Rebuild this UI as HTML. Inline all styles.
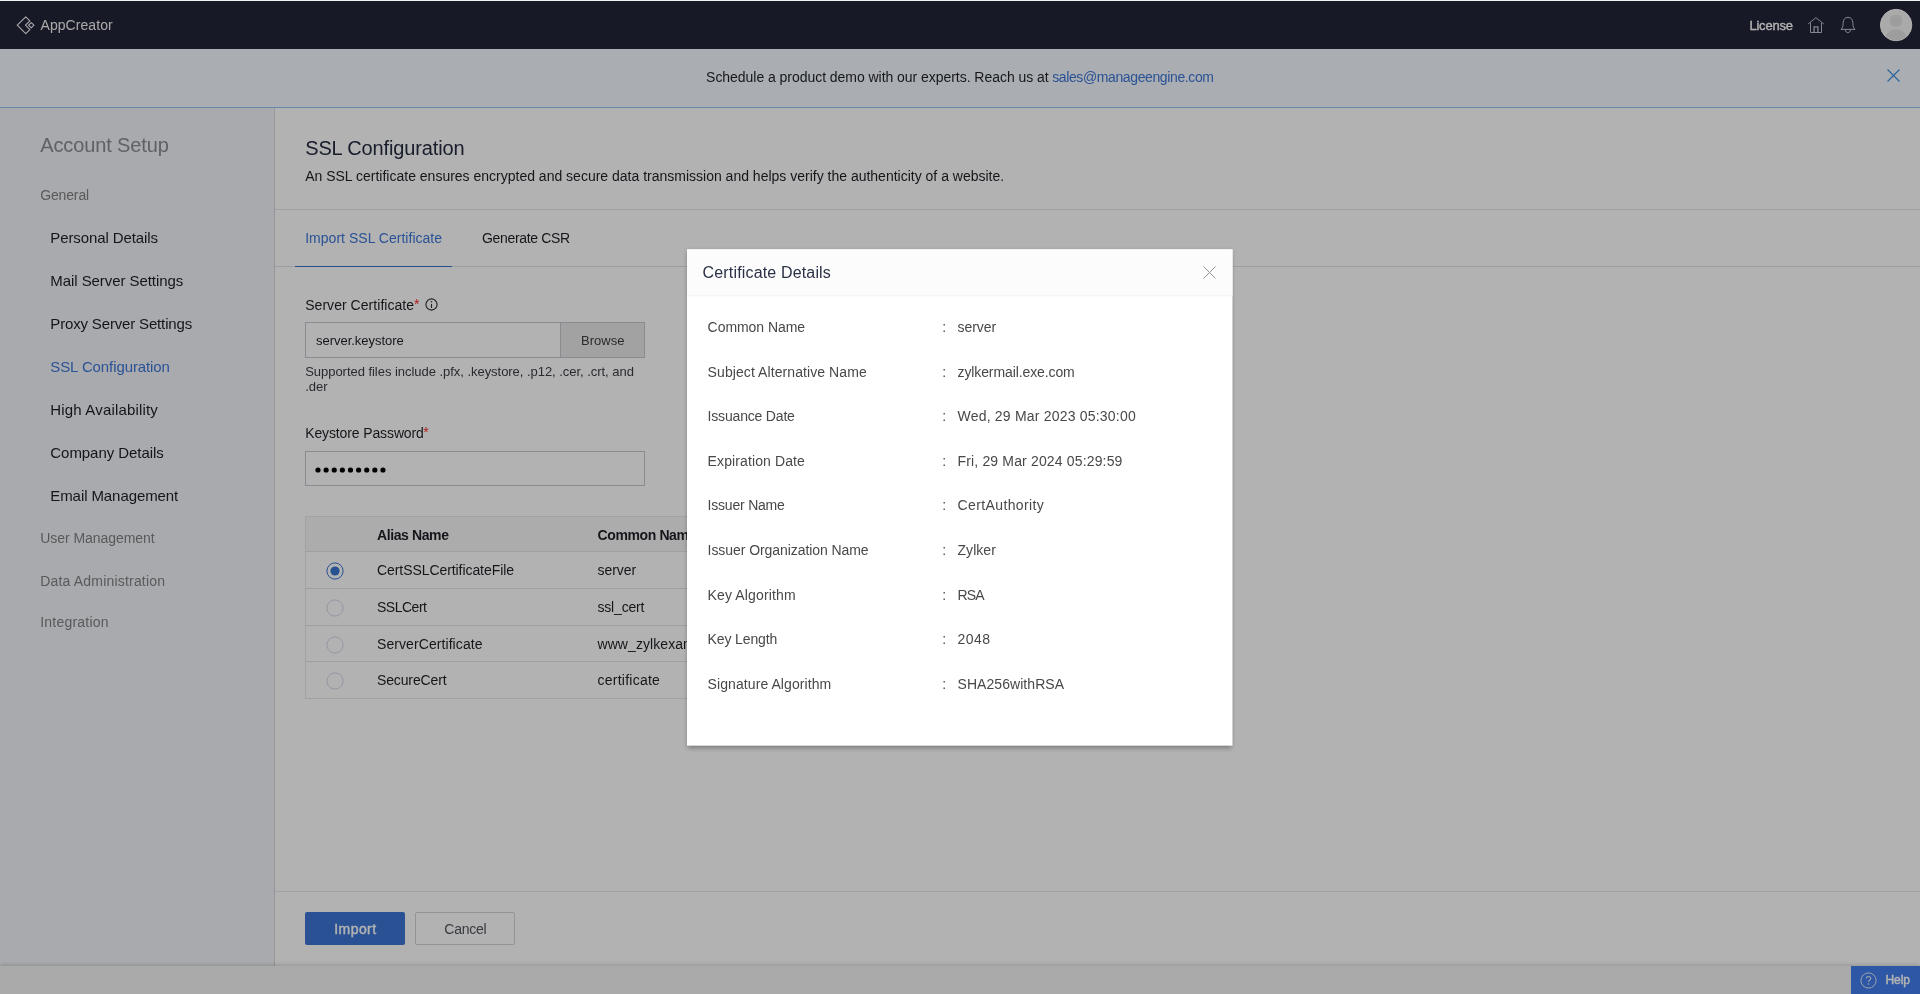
<!DOCTYPE html>
<html lang="en">
<head>
<meta charset="utf-8">
<title>SSL Configuration - AppCreator</title>
<style>
*{box-sizing:border-box;margin:0;padding:0}
html,body{width:1920px;height:994px;overflow:hidden}
body{font-family:"Liberation Sans",sans-serif;background:#fff;color:#222;position:relative;font-size:14px}
.abs{position:absolute}
.t{position:absolute;white-space:pre}
#txt,#mtxt{left:0;top:0;width:1920px;height:994px;will-change:transform}
#page{left:0;top:0;width:1920px;height:994px;overflow:hidden}
#topline{left:0;top:0;width:1920px;height:1px;background:#f1f2ef}
#hdr{left:0;top:1px;width:1920px;height:48px;background:#222538}
#banner{left:0;top:49px;width:1920px;height:59px;background:#f4f8fe;border-bottom:1px solid #98c3f3}
#side{left:0;top:108px;width:275px;height:858px;background:#f3f4f9;border-right:1px solid #d8d8d8}
#main{left:275px;top:108px;width:1645px;height:858px;background:#fff}
#bottom{left:0;top:966px;width:1920px;height:28px;background:#f4f4f4;box-shadow:0 -1px 4px rgba(0,0,0,.18)}
.hl{position:absolute;height:1px;background:#e4e5e8}
#overlay{left:0;top:0;width:1920px;height:994px;background:rgba(0,0,0,.3)}
#modal{left:0;top:0;width:546px;height:497px;transform-origin:0 0;transform:translate(687px,249.33px) scale(.999084,.998652);background:#fff;box-shadow:0 2px 5px rgba(0,0,0,.32)}
#mhead{left:0;top:0;width:546px;height:46.7px;background:#fcfcfd;border-bottom:1px solid #f3f3f5}
svg{position:absolute;overflow:visible}
</style>
</head>
<body>
<div class="abs" id="page">
<div class="abs" id="hdr"></div>
<div class="abs" id="banner"></div>
<div class="abs" id="side"></div>
<div class="abs" id="main"></div>
<div class="hl" style="left:275px;top:209px;width:1645px"></div>
<div class="hl" style="left:275px;top:266px;width:1645px;background:#dde2e8"></div>
<div class="abs" style="left:295px;top:266px;width:157px;height:1px;background:#3872cc"></div>
<div class="hl" style="left:275px;top:891px;width:1645px"></div>
<!-- file input -->
<div class="abs" style="left:305px;top:322px;width:340px;height:36px;border:1px solid #c6c8cf;background:#fff"></div>
<div class="abs" style="left:560px;top:322px;width:85px;height:36px;border:1px solid #c6c8cf;background:#e9e9e9"></div>
<svg style="left:425.4px;top:298.3px" width="13" height="13" viewBox="0 0 13 13"><circle cx="6.5" cy="6.5" r="5.6" fill="none" stroke="#2e3035" stroke-width="1.1"/><rect x="5.950" y="5.9" width="1.1" height="4.1" fill="#2e3035"/><circle cx="6.5" cy="3.7" r=".8" fill="#2e3035"/></svg>
<!-- password -->
<div class="abs" style="left:305px;top:451px;width:340px;height:35px;border:1px solid #c6c8cf;background:#fff"></div>
<svg style="left:315px;top:466.9px" width="72" height="6" viewBox="0 0 72 6"><g fill="#000"><circle cx="3.00" cy="3" r="2.6"/><circle cx="11.12" cy="3" r="2.6"/><circle cx="19.24" cy="3" r="2.6"/><circle cx="27.36" cy="3" r="2.6"/><circle cx="35.48" cy="3" r="2.6"/><circle cx="43.60" cy="3" r="2.6"/><circle cx="51.72" cy="3" r="2.6"/><circle cx="59.84" cy="3" r="2.6"/><circle cx="67.96" cy="3" r="2.6"/></g></svg>
<!-- table -->
<div class="abs" style="left:305px;top:516px;width:700px;height:183px;border:1px solid #e8e9eb"></div>
<div class="abs" style="left:306px;top:517px;width:698px;height:34px;background:#f7f7f7"></div>
<div class="hl" style="left:305px;top:551px;width:700px"></div>
<div class="hl" style="left:305px;top:588px;width:700px"></div>
<div class="hl" style="left:305px;top:625px;width:700px"></div>
<div class="hl" style="left:305px;top:661px;width:700px"></div>
<svg style="left:325.5px;top:561.5px" width="18" height="18" viewBox="0 0 18 18"><circle cx="9" cy="9" r="8.1" fill="#fff" stroke="#3a74d0" stroke-width="1"/><circle cx="9" cy="9" r="4.6" fill="#3a74d0"/></svg>
<svg style="left:325.5px;top:598.5px" width="18" height="18" viewBox="0 0 18 18"><circle cx="9" cy="9" r="8.1" fill="#fff" stroke="#d3d9e7" stroke-width="1"/></svg>
<svg style="left:325.5px;top:635.5px" width="18" height="18" viewBox="0 0 18 18"><circle cx="9" cy="9" r="8.1" fill="#fff" stroke="#d3d9e7" stroke-width="1"/></svg>
<svg style="left:325.5px;top:671.5px" width="18" height="18" viewBox="0 0 18 18"><circle cx="9" cy="9" r="8.1" fill="#fff" stroke="#d3d9e7" stroke-width="1"/></svg>
<!-- footer buttons -->
<div class="abs" style="left:305px;top:912px;width:100px;height:33px;background:#3c75d4;border-radius:2px"></div>
<div class="abs" style="left:415px;top:912px;width:100px;height:33px;background:#fff;border:1px solid #d0d3d9;border-radius:2px"></div>

<div class="abs" id="bottom"></div>
<div class="abs" style="left:1851px;top:966px;width:69px;height:28px;background:#437fee"></div>
<svg style="left:1860px;top:971.6px" width="17" height="17" viewBox="0 0 17 17"><circle cx="8.5" cy="8.5" r="7.6" fill="none" stroke="#e8ecf6" stroke-width="1"/><path d="M6.3 6.6c0-1.3 1-2.1 2.2-2.1s2.2.8 2.2 2c0 1.6-2.1 1.7-2.1 3.5" fill="none" stroke="#e8ecf6" stroke-width="1.1"/><circle cx="8.6" cy="12" r=".8" fill="#e8ecf6"/></svg>
<!-- header icons -->
<svg style="left:15.7px;top:15.7px" width="18.6" height="18.6" viewBox="0 0 20 20" fill="none" stroke="#f4f4f6" stroke-width="1.15" stroke-linejoin="round"><path d="M10.5 1 1.300 9.900 10.500 19 14.900 14.600 10.200 9.900 14.900 5.200Z"/><path d="M16.400 7 13.500 9.900 16.400 12.800 19.300 9.900Z"/></svg>
<svg style="left:1807px;top:16px" width="18" height="18" viewBox="0 0 18 18" fill="none" stroke="#bfc1ca" stroke-width="1" stroke-linejoin="miter"><path d="M1.2 7.9 8.900 1.700l7.8 6.2"/><path d="M3.500 6.800v9.700h11V6.800"/><path d="M7.100 16.500v-5.700h3.800v5.700" stroke-width="1.3"/></svg>
<svg style="left:1840px;top:16px" width="16" height="18" viewBox="0 0 16 18" fill="none" stroke="#bfc1ca" stroke-width="1" stroke-linejoin="round"><path d="M1 13.400C2.600 11.900 3.100 10 3.100 7.200 3.100 3.600 5 1.300 8 1.300s4.900 2.300 4.900 5.900c0 2.800.5 4.700 2.100 6.200z"/><path d="M5.400 13.700C5.400 17.600 10.400 17.600 10.400 13.700"/></svg>
<svg style="left:1879px;top:8px" width="34" height="34" viewBox="0 0 34 34"><defs><clipPath id="av"><circle cx="17.1" cy="17.05" r="15.2"/></clipPath></defs><circle cx="17.1" cy="17.05" r="15.7" fill="#f4f4f4" stroke="#fbfbfb" stroke-width="1"/><g clip-path="url(#av)" fill="#e1e1e1"><rect x="11.1" y="7" width="12" height="11.6" rx="4.800"/><ellipse cx="17.1" cy="33" rx="11.600" ry="11.600"/></g></svg>
<svg style="left:1887px;top:69px" width="13" height="13" viewBox="0 0 13 13" stroke="#3f8fe0" stroke-width="1.2" fill="none"><path d="M.5.5l12 12M12.500.5l-12 12"/></svg>

<div class="abs" id="txt">
<div class="t" style="left:40.5px;top:15.15px;font-size:14px;line-height:20px;letter-spacing:0.061px;color:#f2f2f2;">AppCreator</div>
<div class="t" style="left:1749.4px;top:15.50px;font-size:13px;line-height:20px;letter-spacing:-0.204px;color:#ffffff;-webkit-text-stroke:.35px #fff;">License</div>
<div class="t" style="left:706.1px;top:67.15px;font-size:14px;line-height:20px;letter-spacing:-0.042px;color:#1f2228;">Schedule a product demo with our experts. Reach us at </div>
<div class="t" style="left:1052.2px;top:67.15px;font-size:14px;line-height:20px;letter-spacing:-0.385px;color:#3d76d6;">sales@manageengine.com</div>
<div class="t" style="left:40.2px;top:131.27px;font-size:20px;line-height:28px;letter-spacing:-0.111px;color:#888b91;">Account Setup</div>
<div class="t" style="left:40.2px;top:185.15px;font-size:14px;line-height:20px;letter-spacing:-0.142px;color:#808184;">General</div>
<div class="t" style="left:50.3px;top:227.80px;font-size:15px;line-height:20px;letter-spacing:-0.101px;color:#1c1f24;">Personal Details</div>
<div class="t" style="left:50.3px;top:270.80px;font-size:15px;line-height:20px;letter-spacing:-0.068px;color:#1c1f24;">Mail Server Settings</div>
<div class="t" style="left:50.3px;top:313.80px;font-size:15px;line-height:20px;letter-spacing:-0.159px;color:#1c1f24;">Proxy Server Settings</div>
<div class="t" style="left:50.3px;top:356.80px;font-size:15px;line-height:20px;letter-spacing:-0.096px;color:#3d76d6;">SSL Configuration</div>
<div class="t" style="left:50.3px;top:399.80px;font-size:15px;line-height:20px;letter-spacing:0.171px;color:#1c1f24;">High Availability</div>
<div class="t" style="left:50.3px;top:442.80px;font-size:15px;line-height:20px;letter-spacing:-0.047px;color:#1c1f24;">Company Details</div>
<div class="t" style="left:50.3px;top:485.80px;font-size:15px;line-height:20px;letter-spacing:-0.086px;color:#1c1f24;">Email Management</div>
<div class="t" style="left:40.2px;top:528.15px;font-size:14px;line-height:20px;letter-spacing:-0.049px;color:#808184;">User Management</div>
<div class="t" style="left:40.2px;top:570.55px;font-size:14px;line-height:20px;letter-spacing:0.191px;color:#808184;">Data Administration</div>
<div class="t" style="left:40.2px;top:611.95px;font-size:14px;line-height:20px;letter-spacing:0.218px;color:#808184;">Integration</div>
<div class="t" style="left:305.2px;top:134.07px;font-size:20px;line-height:28px;letter-spacing:-0.128px;color:#252b40;">SSL Configuration</div>
<div class="t" style="left:305.2px;top:166.25px;font-size:14px;line-height:20px;letter-spacing:-0.001px;color:#1d2026;">An SSL certificate ensures encrypted and secure data transmission and helps verify the authenticity of a website.</div>
<div class="t" style="left:305.2px;top:228.35px;font-size:14px;line-height:20px;letter-spacing:0.022px;color:#3d76d6;">Import SSL Certificate</div>
<div class="t" style="left:482.0px;top:228.35px;font-size:14px;line-height:20px;letter-spacing:-0.340px;color:#1d2026;">Generate CSR</div>
<div class="t" style="left:305.2px;top:295.15px;font-size:14px;line-height:20px;letter-spacing:0.044px;color:#1d2026;">Server Certificate</div>
<div class="t" style="left:413.9px;top:294.15px;font-size:14px;line-height:20px;letter-spacing:0.601px;color:#ff2a2a;">*</div>
<div class="t" style="left:316.0px;top:330.80px;font-size:13px;line-height:20px;letter-spacing:-0.021px;color:#1d2026;">server.keystore</div>
<div class="t" style="left:581.0px;top:330.80px;font-size:13px;line-height:20px;letter-spacing:0.004px;color:#3d3d3f;">Browse</div>
<div class="t" style="left:305.2px;top:361.80px;font-size:13px;line-height:20px;letter-spacing:-0.037px;color:#3a3d44;">Supported files include .pfx, .keystore, .p12, .cer, .crt, and</div>
<div class="t" style="left:305.2px;top:377.30px;font-size:13px;line-height:20px;letter-spacing:-0.020px;color:#3a3d44;">.der</div>
<div class="t" style="left:305.2px;top:422.95px;font-size:14px;line-height:20px;letter-spacing:-0.121px;color:#1d2026;">Keystore Password</div>
<div class="t" style="left:423.3px;top:421.95px;font-size:14px;line-height:20px;letter-spacing:0.601px;color:#ff2a2a;">*</div>
<div class="t" style="left:377.0px;top:524.95px;font-size:14px;line-height:20px;letter-spacing:-0.396px;color:#1d2026;font-weight:700;">Alias Name</div>
<div class="t" style="left:597.5px;top:524.95px;font-size:14px;line-height:20px;letter-spacing:-0.380px;color:#1d2026;font-weight:700;">Common Name</div>
<div class="t" style="left:377.0px;top:560.35px;font-size:14px;line-height:20px;letter-spacing:-0.071px;color:#1e2024;">CertSSLCertificateFile</div>
<div class="t" style="left:597.5px;top:560.35px;font-size:14px;line-height:20px;letter-spacing:-0.030px;color:#1e2024;">server</div>
<div class="t" style="left:377.0px;top:596.95px;font-size:14px;line-height:20px;letter-spacing:-0.493px;color:#1e2024;">SSLCert</div>
<div class="t" style="left:597.5px;top:596.95px;font-size:14px;line-height:20px;letter-spacing:-0.191px;color:#1e2024;">ssl_cert</div>
<div class="t" style="left:377.0px;top:633.85px;font-size:14px;line-height:20px;letter-spacing:0.078px;color:#1e2024;">ServerCertificate</div>
<div class="t" style="left:597.5px;top:633.85px;font-size:14px;line-height:20px;letter-spacing:0.071px;color:#1e2024;">www_zylkexample</div>
<div class="t" style="left:377.0px;top:669.95px;font-size:14px;line-height:20px;letter-spacing:-0.134px;color:#1e2024;">SecureCert</div>
<div class="t" style="left:597.5px;top:669.95px;font-size:14px;line-height:20px;letter-spacing:0.250px;color:#1e2024;">certificate</div>
<div class="t" style="left:334.3px;top:919.15px;font-size:14px;line-height:20px;letter-spacing:0.417px;color:#ffffff;-webkit-text-stroke:.4px #fff;">Import</div>
<div class="t" style="left:444.3px;top:919.15px;font-size:14px;line-height:20px;letter-spacing:-0.250px;color:#50555e;">Cancel</div>
<div class="t" style="left:1885.5px;top:970.14px;font-size:12px;line-height:20px;letter-spacing:-0.072px;color:#ffffff;-webkit-text-stroke:.45px #fff;">Help</div>
</div>
</div>
<div class="abs" id="overlay"></div>
<div class="abs" id="topline"></div>
<div class="abs" id="modal"><div class="abs" id="mhead"></div></div>
<svg style="left:1203px;top:266.4px" width="13" height="13" viewBox="0 0 13 13" stroke="#949494" stroke-width="1" fill="none"><path d="M.5.5l12 12M12.500.5l-12 12"/></svg>

<div class="abs" id="mtxt">
<div class="t" style="left:702.6px;top:263.46px;font-size:16px;line-height:20px;letter-spacing:0.158px;color:#2a3045;">Certificate Details</div>
<div class="t" style="left:707.6px;top:316.95px;font-size:14px;line-height:20px;letter-spacing:-0.049px;color:#484848;">Common Name</div>
<div class="t" style="left:942.3px;top:316.95px;font-size:14px;line-height:20px;letter-spacing:-0.331px;color:#484848;">:</div>
<div class="t" style="left:957.5px;top:316.95px;font-size:14px;line-height:20px;letter-spacing:-0.030px;color:#484848;">server</div>
<div class="t" style="left:707.6px;top:361.55px;font-size:14px;line-height:20px;letter-spacing:0.084px;color:#484848;">Subject Alternative Name</div>
<div class="t" style="left:942.3px;top:361.55px;font-size:14px;line-height:20px;letter-spacing:-0.331px;color:#484848;">:</div>
<div class="t" style="left:957.5px;top:361.55px;font-size:14px;line-height:20px;letter-spacing:-0.106px;color:#484848;">zylkermail.exe.com</div>
<div class="t" style="left:707.6px;top:406.15px;font-size:14px;line-height:20px;letter-spacing:-0.184px;color:#484848;">Issuance Date</div>
<div class="t" style="left:942.3px;top:406.15px;font-size:14px;line-height:20px;letter-spacing:-0.331px;color:#484848;">:</div>
<div class="t" style="left:957.5px;top:406.15px;font-size:14px;line-height:20px;letter-spacing:0.205px;color:#484848;">Wed, 29 Mar 2023 05:30:00</div>
<div class="t" style="left:707.6px;top:450.75px;font-size:14px;line-height:20px;letter-spacing:0.113px;color:#484848;">Expiration Date</div>
<div class="t" style="left:942.3px;top:450.75px;font-size:14px;line-height:20px;letter-spacing:-0.331px;color:#484848;">:</div>
<div class="t" style="left:957.5px;top:450.75px;font-size:14px;line-height:20px;letter-spacing:0.157px;color:#484848;">Fri, 29 Mar 2024 05:29:59</div>
<div class="t" style="left:707.6px;top:495.35px;font-size:14px;line-height:20px;letter-spacing:-0.210px;color:#484848;">Issuer Name</div>
<div class="t" style="left:942.3px;top:495.35px;font-size:14px;line-height:20px;letter-spacing:-0.331px;color:#484848;">:</div>
<div class="t" style="left:957.5px;top:495.35px;font-size:14px;line-height:20px;letter-spacing:0.388px;color:#484848;">CertAuthority</div>
<div class="t" style="left:707.6px;top:539.95px;font-size:14px;line-height:20px;letter-spacing:-0.068px;color:#484848;">Issuer Organization Name</div>
<div class="t" style="left:942.3px;top:539.95px;font-size:14px;line-height:20px;letter-spacing:-0.331px;color:#484848;">:</div>
<div class="t" style="left:957.5px;top:539.95px;font-size:14px;line-height:20px;letter-spacing:0.042px;color:#484848;">Zylker</div>
<div class="t" style="left:707.6px;top:584.55px;font-size:14px;line-height:20px;letter-spacing:0.131px;color:#484848;">Key Algorithm</div>
<div class="t" style="left:942.3px;top:584.55px;font-size:14px;line-height:20px;letter-spacing:-0.331px;color:#484848;">:</div>
<div class="t" style="left:957.5px;top:584.55px;font-size:14px;line-height:20px;letter-spacing:-0.896px;color:#484848;">RSA</div>
<div class="t" style="left:707.6px;top:629.15px;font-size:14px;line-height:20px;letter-spacing:-0.127px;color:#484848;">Key Length</div>
<div class="t" style="left:942.3px;top:629.15px;font-size:14px;line-height:20px;letter-spacing:-0.331px;color:#484848;">:</div>
<div class="t" style="left:957.5px;top:629.15px;font-size:14px;line-height:20px;letter-spacing:0.470px;color:#484848;">2048</div>
<div class="t" style="left:707.6px;top:673.75px;font-size:14px;line-height:20px;letter-spacing:0.081px;color:#484848;">Signature Algorithm</div>
<div class="t" style="left:942.3px;top:673.75px;font-size:14px;line-height:20px;letter-spacing:-0.331px;color:#484848;">:</div>
<div class="t" style="left:957.5px;top:673.75px;font-size:14px;line-height:20px;letter-spacing:0.061px;color:#484848;">SHA256withRSA</div>
</div>
</body>
</html>
